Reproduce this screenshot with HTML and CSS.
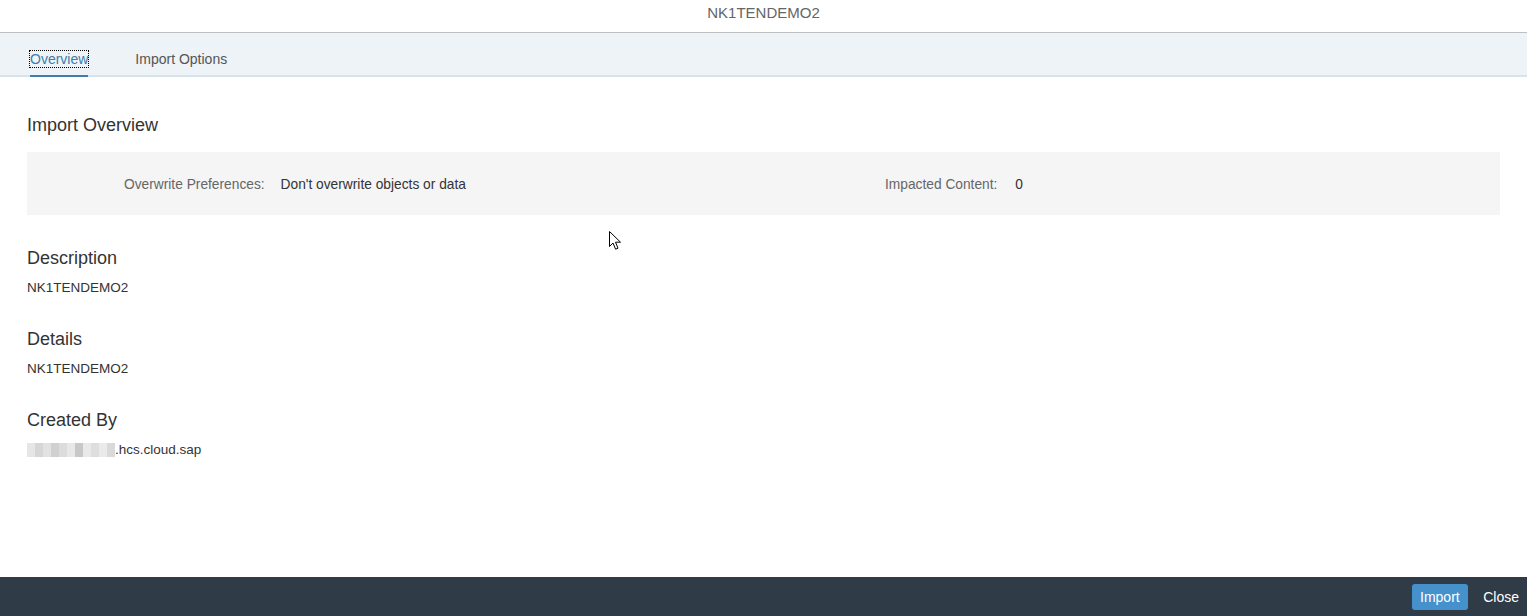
FILE: index.html
```html
<!DOCTYPE html>
<html lang="en">
<head>
<meta charset="utf-8">
<title>NK1TENDEMO2</title>
<link rel="stylesheet" href="styles.css">
</head>
<body>
<div class="dialog">
  <header class="title-bar"><h1 class="title">NK1TENDEMO2</h1></header>
  <nav class="tab-bar">
    <div class="tab tab-active"><span class="tab-label focus">Overview</span></div>
    <div class="tab"><span class="tab-label">Import Options</span></div>
  </nav>
  <main class="content">
    <h2 class="section-title first">Import Overview</h2>
    <div class="summary">
      <div class="pair pair-left">
        <span class="label">Overwrite Preferences:</span>
        <span class="value">Don't overwrite objects or data</span>
      </div>
      <div class="pair pair-right">
        <span class="label">Impacted Content:</span>
        <span class="value">0</span>
      </div>
    </div>
    <h2 class="section-title">Description</h2>
    <p class="text">NK1TENDEMO2</p>
    <h2 class="section-title">Details</h2>
    <p class="text">NK1TENDEMO2</p>
    <h2 class="section-title">Created By</h2>
    <p class="text"><span class="blur"><i class="b1"></i><i class="b2"></i><i class="b3"></i><i class="b4"></i><i class="b5"></i><i class="b6"></i><i class="b7"></i><i class="b8"></i><i class="b9"></i><i class="b10"></i><i class="b11"></i></span>.hcs.cloud.sap</p>
  </main>
  <footer class="footer">
    <button class="btn btn-primary">Import</button>
    <button class="btn btn-plain">Close</button>
  </footer>
</div>
<svg class="cursor" width="13" height="20" viewBox="0 0 13 20"><path d="M0.5 0.5 L0.5 15.5 L4 12 L6.6 18.2 L9 17.2 L6.5 11.2 L11.5 11.2 Z" fill="#fff" stroke="#000" stroke-width="1"/></svg>
</body>
</html>
```

FILE: styles.css
```css
* { box-sizing: border-box; }
html, body { margin: 0; padding: 0; }
body {
  width: 1527px;
  height: 616px;
  overflow: hidden;
  font-family: "Liberation Sans", Arial, sans-serif;
  color: #333;
  background: #fff;
  position: relative;
}
.dialog {
  display: flex;
  flex-direction: column;
  height: 616px;
}
.title-bar {
  height: 33px;
  border-bottom: 1px solid #bfbfbf;
  display: flex;
  align-items: center;
  justify-content: center;
}
.title {
  margin: 0;
  font-size: 15px;
  font-weight: normal;
  color: #666;
  padding-bottom: 8px;
}
.tab-bar {
  height: 44px;
  background: #eef3f7;
  border-bottom: 2px solid #d5e3ef;
  display: flex;
  padding-left: 30px;
  gap: 47px;
}
.tab {
  display: flex;
  align-items: center;
  font-size: 14px;
  color: #555;
  padding-top: 10px;
  margin-bottom: -2px;
  border-bottom: 2px solid transparent;
}
.tab-active {
  color: #427cac;
  border-bottom-color: #427cac;
}
.focus {
  outline: 1px dotted #000;
  outline-offset: 0;
}
.content {
  flex: 1;
  padding: 0 27px;
}
.section-title {
  margin: 0;
  font-size: 18px;
  font-weight: normal;
  color: #333;
  line-height: 22px;
}
.section-title.first { margin-top: 37px; }
.summary {
  margin-top: 16px;
  height: 63px;
  padding-top: 2px;
  background: #f5f5f5;
  display: grid;
  grid-template-columns: 852px 1fr;
  align-items: center;
  font-size: 13.75px;
  margin-bottom: 32px;
}
.pair {
  display: flex;
  gap: 16px;
}
.pair-left { padding-left: 97px; }
.pair-right { padding-left: 6px; gap: 18px; }
.label { color: #666; }
.value { color: #333; }
.text {
  margin: 11px 0 32px 0;
  font-size: 13.5px;
  line-height: 16px;
  color: #333;
}
.blur {
  display: inline-flex;
  vertical-align: -3px;
  height: 14px;
}
.blur i { display: block; width: 8px; height: 14px; }
.b1 { background: #e6e6e6; }
.b2 { background: #d6d6d6; }
.b3 { background: #e2e2e2; }
.b4 { background: #d0d0d0; }
.b5 { background: #dcdcdc; }
.b6 { background: #e8e8e8; }
.b7 { background: #c8c8c8; }
.b8 { background: #e9e9e9; }
.b9 { background: #dedede; }
.b10 { background: #eaeaea; }
.b11 { background: #d9d9d9; }
.footer {
  height: 39px;
  background: #2f3b47;
  display: flex;
  justify-content: flex-end;
  align-items: center;
  padding-right: 0;
  gap: 7px;
}
.btn {
  font-family: "Liberation Sans", Arial, sans-serif;
  font-size: 14px;
  height: 26px;
  border: none;
  border-radius: 3px;
  color: #fff;
  cursor: pointer;
}
.btn-primary {
  background: #4591cc;
  padding: 0 8.5px;
}
.btn-plain {
  background: transparent;
  padding: 0 8px;
}
.cursor {
  position: absolute;
  left: 609px;
  top: 231px;
}
```
